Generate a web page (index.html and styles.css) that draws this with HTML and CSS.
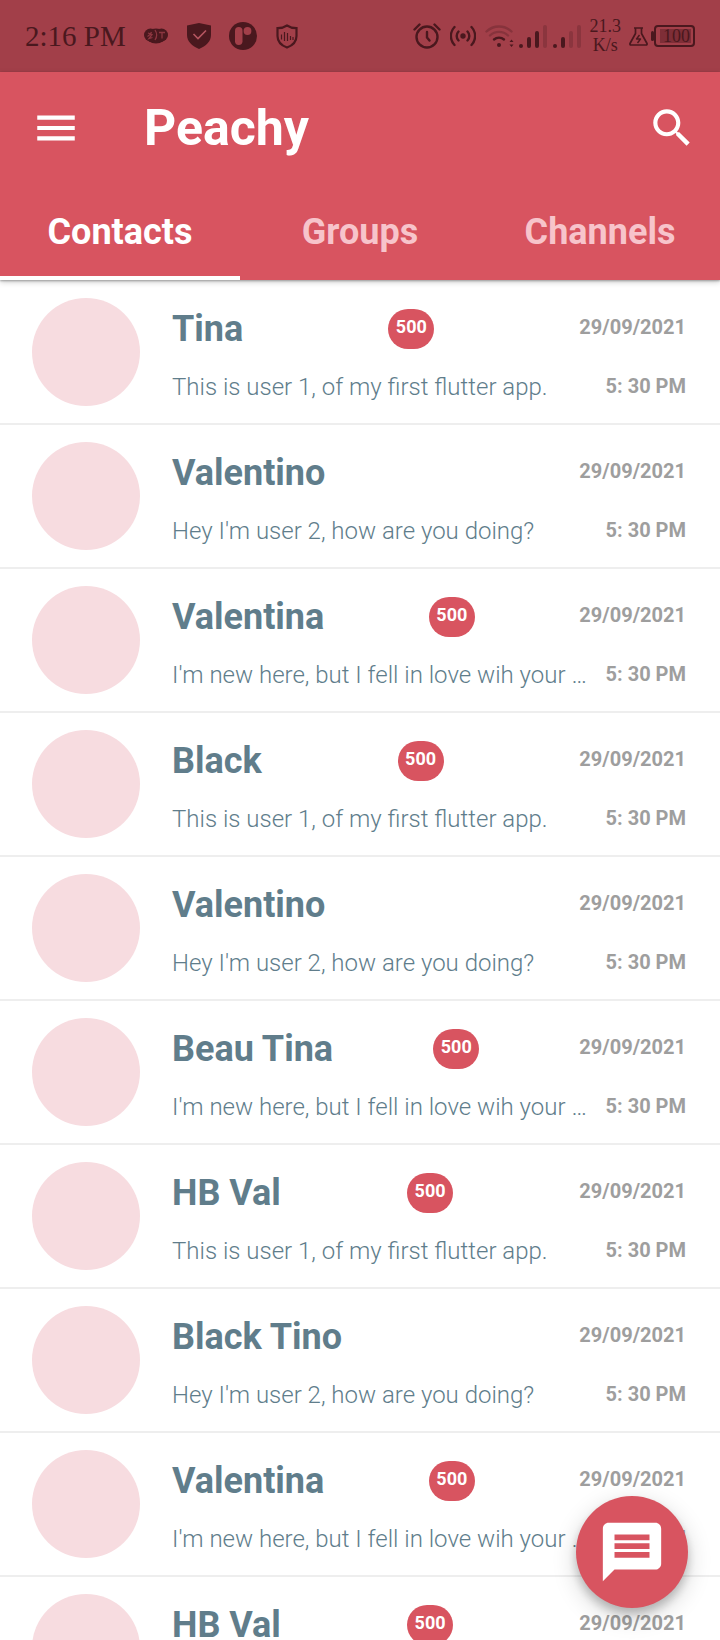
FILE: index.html
```html
<!DOCTYPE html>
<html lang="en">
<head>
<meta charset="utf-8">
<meta name="viewport" content="width=device-width, initial-scale=1">
<title>Peachy</title>
<link rel="stylesheet" href="styles.css">
</head>
<body>
<div class="app">
  <div class="status-bar">
    <div class="status-left">
      <span class="clock">2:16 PM</span>
      <svg class="ico-chat" viewBox="0 0 24 16" width="24" height="16" aria-hidden="true">
        <ellipse cx="12" cy="8" rx="10" ry="7.500" fill="currentColor"/>
        <circle cx="6.500" cy="7" r="6.500" fill="currentColor"/><circle cx="17.500" cy="7" r="6.500" fill="currentColor"/>
        <path d="M3.500 8.500c2-1 3-2 4-4.500M4 5l4 1.500-3 4 3.500-1M15 4.500h6M18 4.500v6M11 2c2 3 2 7 0 10" fill="none" stroke="#8c3640" stroke-width="1.300"/>
      </svg>
      <svg class="ico-shield" viewBox="0 0 24 26" width="24" height="26" aria-hidden="true">
        <path d="M12 0 24 2.500V12c0 6.500-5 11-12 14C5 23 0 18.500 0 12V2.500z" fill="currentColor"/>
        <path d="m6.500 11 4.500 4.500 8-8" fill="none" stroke="#b65660" stroke-width="1.600"/>
      </svg>
      <svg class="ico-round" viewBox="0 0 28 28" width="28" height="28" aria-hidden="true">
        <circle cx="14" cy="14" r="14" fill="currentColor"/>
        <rect x="6" y="5" width="7.500" height="18" rx="3.700" fill="#a23f49"/><circle cx="18.500" cy="9" r="3.900" fill="#a23f49"/>
      </svg>
      <svg class="ico-guard" viewBox="0 0 22 25" width="22" height="25" aria-hidden="true">
        <path d="M11 1.500c3 2 6 2.700 9.500 2.700V12c0 6-4 9.500-9.500 11.500C5.500 21.500 1.500 18 1.500 12V4.200C5 4.200 8 3.500 11 1.500z" fill="none" stroke="currentColor" stroke-width="2.200"/>
        <path d="M5.500 10.500v5M8.500 8v9M11.500 9v8M14.500 12v4M17 13v3" stroke="currentColor" stroke-width="1.200"/>
      </svg>
    </div>
    <div class="status-right">
      <svg viewBox="0 0 28 26" width="28" height="26" aria-hidden="true" fill="none" stroke="currentColor" stroke-width="2.400" stroke-linecap="round" stroke-linejoin="round">
        <circle cx="14" cy="14" r="10.500"/><path d="M14 9v5.500l2.500 3M1.500 6.500l5-5M26.500 6.500l-5-5"/>
      </svg>
      <svg class="ico-hotspot" viewBox="0 0 26 24" width="26" height="24" aria-hidden="true" fill="none" stroke="currentColor" stroke-width="2.400" stroke-linecap="round">
        <circle cx="13" cy="12" r="2.700" fill="currentColor" stroke="none"/>
        <path d="M8.500 7.500a6.500 6.500 0 0 0 0 9M17.500 7.500a6.500 6.500 0 0 1 0 9M4.500 3a13 13 0 0 0 0 18M21.500 3a13 13 0 0 1 0 18"/>
      </svg>
      <svg class="ico-wifi" viewBox="0 0 30 24" width="30" height="24" aria-hidden="true" fill="none" stroke="currentColor" stroke-width="2.400" stroke-linecap="round">
        <path d="M1.500 7.500a18 18 0 0 1 25 0M5 11.500a13 13 0 0 1 18 0" opacity=".3"/>
        <path d="M9 15.500a7.500 7.500 0 0 1 10 0"/><circle cx="14" cy="21" r="2" fill="currentColor" stroke="none"/>
        <path d="m24.500 18 2-2.500 2 2.500zM24.500 20.500l2 2.500 2-2.500z" fill="currentColor" stroke="none"/>
      </svg>
      <svg class="ico-signal-one" viewBox="0 0 28 23" width="28" height="23" aria-hidden="true" stroke="currentColor" stroke-width="4" stroke-linecap="round">
        <path d="M2 21v0M10 21v-7M18 21v-13"/><path d="M26 21V2" opacity=".25"/>
      </svg>
      <svg class="ico-signal-two" viewBox="0 0 28 23" width="28" height="23" aria-hidden="true" stroke="currentColor" stroke-width="4" stroke-linecap="round">
        <path d="M2 21v0M10 21v-7"/><path d="M18 21v-13M26 21V2" opacity=".25"/>
      </svg>
      <div class="speed"><span>21.3</span><span>K/s</span></div>
      <svg viewBox="0 0 19 19" width="19" height="19" aria-hidden="true" fill="none" stroke="currentColor" stroke-width="1.700" stroke-linejoin="round">
        <path d="M5 1h9M6.500 1v5.500L1 16.500c-.3 1 .2 1.500 1 1.500h15c.8 0 1.300-.5 1-1.500L12.500 6.500V1"/><path d="M10.500 8 7.500 12h4l-3 4" stroke-width="1.400"/>
      </svg>
      <div class="battery"><span class="battery-level">100</span></div>
    </div>
  </div>

  <header class="app-bar">
    <div class="toolbar">
      <button class="icon-button menu-button" type="button" aria-label="Open menu">
        <svg viewBox="0 0 24 24" width="50" height="50" fill="currentColor"><path d="M3 18h18v-2H3v2zm0-5h18v-2H3v2zm0-7v2h18V6H3z"/></svg>
      </button>
      <h1 class="title">Peachy</h1>
      <button class="icon-button search-button" type="button" aria-label="Search">
        <svg viewBox="0 0 24 24" width="50" height="50" fill="currentColor"><path d="M15.500 14h-.79l-.28-.27C15.410 12.590 16 11.110 16 9.500 16 5.910 13.090 3 9.500 3S3 5.910 3 9.500 5.910 16 9.500 16c1.610 0 3.090-.59 4.230-1.570l.27.28v.79l5 4.990L20.490 19l-4.990-5zm-6 0C7.010 14 5 11.990 5 9.500S7.010 5 9.500 5 14 7.010 14 9.500 11.990 14 9.500 14z"/></svg>
      </button>
    </div>
    <nav class="tabs" role="tablist">
      <button class="tab active" type="button" role="tab" aria-selected="true">Contacts</button>
      <button class="tab" type="button" role="tab" aria-selected="false">Groups</button>
      <button class="tab" type="button" role="tab" aria-selected="false">Channels</button>
    </nav>
  </header>

  <main class="list-area">
    <ul class="contacts">
      <li class="contact"><div class="avatar"></div><div class="details"><div class="line top"><h2 class="name">Tina</h2><span class="badge">500</span><span class="date">29/09/2021</span></div><div class="line bottom"><p class="message">This is user 1, of my first flutter app.</p><span class="time">5: 30 PM</span></div></div></li>
      <li class="contact"><div class="avatar"></div><div class="details"><div class="line top"><h2 class="name">Valentino</h2><span class="date">29/09/2021</span></div><div class="line bottom"><p class="message">Hey I'm user 2, how are you doing?</p><span class="time">5: 30 PM</span></div></div></li>
      <li class="contact"><div class="avatar"></div><div class="details"><div class="line top"><h2 class="name">Valentina</h2><span class="badge">500</span><span class="date">29/09/2021</span></div><div class="line bottom"><p class="message">I'm new here, but I fell in love wih your …</p><span class="time">5: 30 PM</span></div></div></li>
      <li class="contact"><div class="avatar"></div><div class="details"><div class="line top"><h2 class="name">Black</h2><span class="badge">500</span><span class="date">29/09/2021</span></div><div class="line bottom"><p class="message">This is user 1, of my first flutter app.</p><span class="time">5: 30 PM</span></div></div></li>
      <li class="contact"><div class="avatar"></div><div class="details"><div class="line top"><h2 class="name">Valentino</h2><span class="date">29/09/2021</span></div><div class="line bottom"><p class="message">Hey I'm user 2, how are you doing?</p><span class="time">5: 30 PM</span></div></div></li>
      <li class="contact"><div class="avatar"></div><div class="details"><div class="line top"><h2 class="name">Beau Tina</h2><span class="badge">500</span><span class="date">29/09/2021</span></div><div class="line bottom"><p class="message">I'm new here, but I fell in love wih your …</p><span class="time">5: 30 PM</span></div></div></li>
      <li class="contact"><div class="avatar"></div><div class="details"><div class="line top"><h2 class="name">HB Val</h2><span class="badge">500</span><span class="date">29/09/2021</span></div><div class="line bottom"><p class="message">This is user 1, of my first flutter app.</p><span class="time">5: 30 PM</span></div></div></li>
      <li class="contact"><div class="avatar"></div><div class="details"><div class="line top"><h2 class="name">Black Tino</h2><span class="date">29/09/2021</span></div><div class="line bottom"><p class="message">Hey I'm user 2, how are you doing?</p><span class="time">5: 30 PM</span></div></div></li>
      <li class="contact"><div class="avatar"></div><div class="details"><div class="line top"><h2 class="name">Valentina</h2><span class="badge">500</span><span class="date">29/09/2021</span></div><div class="line bottom"><p class="message">I'm new here, but I fell in love wih your …</p><span class="time">5: 30 PM</span></div></div></li>
      <li class="contact"><div class="avatar"></div><div class="details"><div class="line top"><h2 class="name">HB Val</h2><span class="badge">500</span><span class="date">29/09/2021</span></div><div class="line bottom"><p class="message">This is user 1, of my first flutter app.</p><span class="time">5: 30 PM</span></div></div></li>
    </ul>
  </main>

  <button class="fab" type="button" aria-label="New message">
    <svg viewBox="0 0 24 24" width="70" height="70" fill="currentColor"><path d="M20 2H4c-1.100 0-1.990.9-1.990 2L2 22l4-4h14c1.100 0 2-.9 2-2V4c0-1.100-.9-2-2-2zm-2 12H6v-2h12v2zm0-3H6V9h12v2zm0-3H6V6h12v2z"/></svg>
  </button>
</div>
</body>
</html>
```
FILE: styles.css
```css
:root {
  --brand: #d85460;
  --slate: #607d8b;
}

* { box-sizing: border-box; }

body {
  margin: 0;
  background: #fff;
  font-family: Roboto, "Liberation Sans", sans-serif;
}

button {
  border: 0;
  padding: 0;
  background: none;
  color: inherit;
  font: inherit;
}

svg { display: block; flex: none; }

.app {
  display: flex;
  flex-direction: column;
  height: 100vh;
}

.status-bar {
  flex: none;
  display: flex;
  justify-content: space-between;
  align-items: center;
  height: 72px;
  padding: 0 25px;
  background: #a23f49;
  color: #4a181e;
  font-family: "Liberation Serif", serif;
}

.status-left, .status-right {
  display: flex;
  align-items: center;
}

.clock { font-size: 29px; margin-right: 18px; }
.ico-chat, .ico-round { margin-right: 19px; }
.ico-shield { margin-right: 18px; }
.ico-hotspot { margin: 0 9px; }
.ico-wifi { margin-right: 4px; }
.ico-signal-one { margin-right: 6px; }
.ico-signal-two { margin-right: 9px; }

.speed {
  display: flex;
  flex-direction: column;
  align-items: center;
  margin-right: 8px;
  font-size: 18px;
  line-height: 19px;
}

.battery {
  display: flex;
  align-items: center;
  margin-left: 3px;
}

.battery::before {
  content: "";
  width: 3px;
  height: 10px;
  border-radius: 2px;
  background: currentColor;
}

.battery-level {
  width: 41px;
  height: 22px;
  border: 2px solid currentColor;
  border-radius: 4px;
  padding-left: 4px;
  background: #7e2e37 content-box;
  box-shadow: inset 0 0 0 2px #a23f49;
  text-align: center;
  font-size: 18px;
  line-height: 18px;
}

.app-bar {
  flex: none;
  position: relative;
  background: var(--brand);
  color: #fff;
  box-shadow: 0 1px 2px rgba(0, 0, 0, .3), 0 2px 6px rgba(0, 0, 0, .2);
}

.toolbar {
  display: flex;
  align-items: center;
  height: 112px;
}

.icon-button {
  display: flex;
  align-items: center;
  justify-content: center;
  height: 96px;
}

.menu-button { width: 112px; }
.search-button { width: 96px; }

.title {
  flex: 1;
  margin: 0;
  padding-left: 32px;
  font-size: 50px;
  line-height: 60px;
  font-weight: 700;
}

.tabs {
  display: grid;
  grid-template-columns: repeat(3, 1fr);
}

.tab {
  height: 96px;
  padding-top: 4px;
  border-bottom: 4px solid transparent;
  color: #f7c4cb;
  font-size: 36px;
  font-weight: 700;
}

.tab.active {
  border-color: #fff;
  color: #fff;
}

.list-area {
  flex: 1;
  min-height: 0;
  padding-top: 1px;
  overflow-y: auto;
  scrollbar-width: none;
}

.contacts {
  margin: 0;
  padding: 0;
  list-style: none;
}

.contact {
  display: flex;
  gap: 32px;
  padding: 17px 34px 17px 32px;
  border-bottom: 2px solid #eee;
}

.avatar {
  flex: none;
  width: 108px;
  height: 108px;
  border-radius: 50%;
  background: #f7dce0;
}

.details {
  flex: 1;
  min-width: 0;
  display: flex;
  flex-direction: column;
  gap: 24px;
  padding-top: 11px;
}

.line {
  display: flex;
  align-items: center;
  justify-content: space-between;
}

.top { height: 40px; }
.bottom { gap: 16px; height: 28px; }

.name {
  margin: 0;
  color: var(--slate);
  font-size: 36px;
  line-height: 40px;
  font-weight: 700;
}

.badge {
  min-width: 46px;
  height: 40px;
  padding: 0 7px;
  border-radius: 20px;
  background: var(--brand);
  color: #fff;
  text-align: center;
  font-size: 18px;
  line-height: 36px;
  font-weight: 700;
}

.date, .time {
  flex: none;
  color: #9e9e9e;
  font-size: 20px;
  font-weight: 700;
}

.date { padding-bottom: 4px; }
.time { padding-bottom: 2px; }

.message {
  margin: 0;
  overflow: hidden;
  white-space: nowrap;
  text-overflow: ellipsis;
  color: var(--slate);
  font-size: 24px;
  line-height: 28px;
  font-weight: 300;
}

.fab {
  position: fixed;
  right: 32px;
  bottom: 32px;
  display: flex;
  align-items: center;
  justify-content: center;
  width: 112px;
  height: 112px;
  border-radius: 50%;
  background: var(--brand);
  color: #fff;
  box-shadow: 0 6px 10px rgba(0, 0, 0, .2), 0 8px 24px rgba(0, 0, 0, .18);
}
```
